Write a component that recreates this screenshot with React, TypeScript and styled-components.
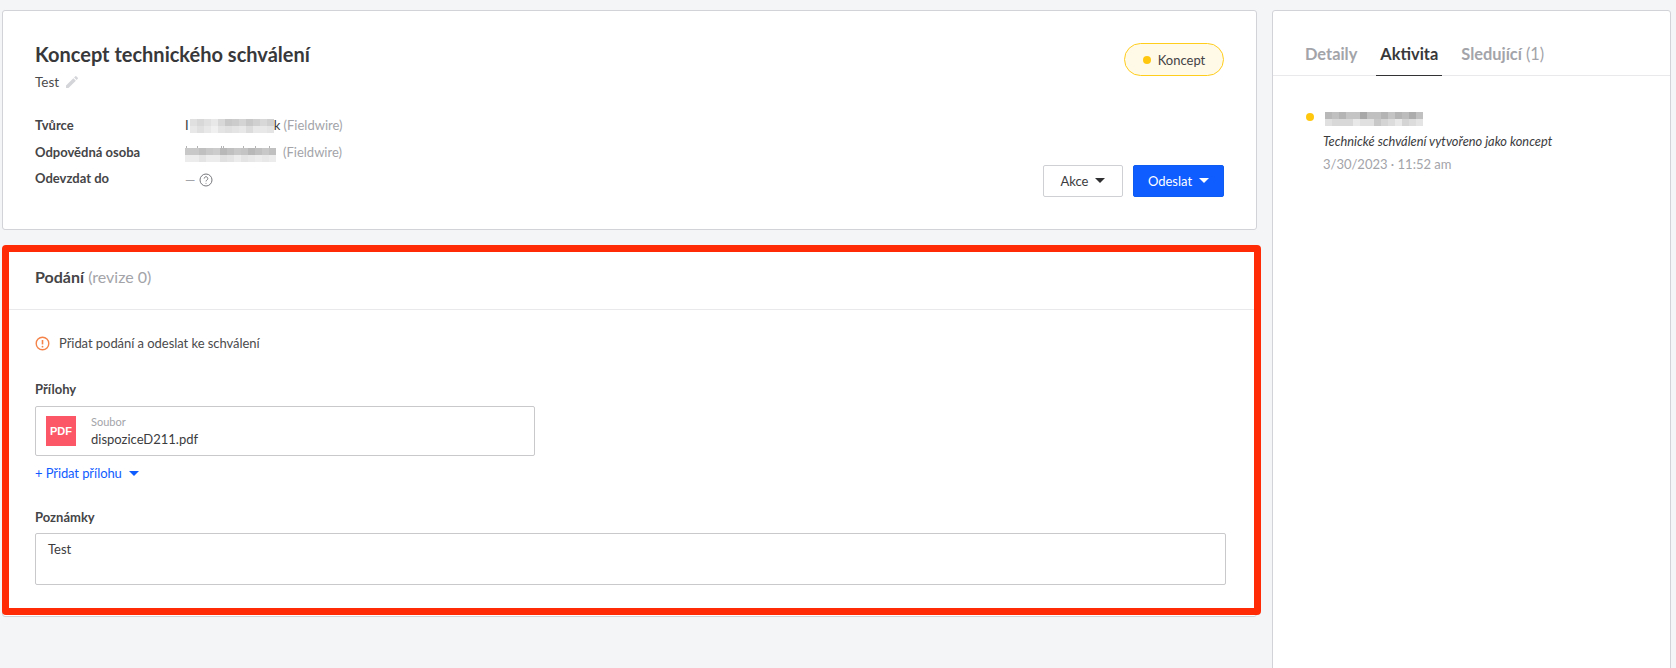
import React from "react";
import styled, { createGlobalStyle } from "styled-components";

const Global = createGlobalStyle`
  html, body { margin: 0; padding: 0; background: #f4f5f7; }
  body { font-family: Lato, "Noto Sans", sans-serif; color: #3c3c3e; font-size: 13px; }
  * { box-sizing: border-box; }
`;

const Page = styled.div`
  display: grid;
  grid-template-columns: 1255px 399px;
  column-gap: 15px;
  padding: 10px 5px 0 2px;
  height: 668px;
  overflow: hidden;
`;
const LeftColumn = styled.div`
  display: flex;
  flex-direction: column;
  gap: 20px;
`;
const Card = styled.section`
  position: relative;
  background: #fff;
  border: 1px solid #d2d3d8;
  border-radius: 3px;
`;
const SummaryCard = styled(Card)`
  height: 220px;
  padding: 30px 32px 0 32px;
  display: flex;
  flex-direction: column;
`;
const SummaryTop = styled.div`
  display: flex;
  justify-content: space-between;
  align-items: flex-start;
`;
const Title = styled.h1`
  margin: 0;
  font-size: 20px;
  line-height: 26px;
  font-weight: 700;
  color: #38383a;
`;
const SubRow = styled.div`
  display: flex;
  align-items: center;
  gap: 5px;
  margin-top: 5px;
  line-height: 20px;
  font-size: 13.5px;
  color: #4a4a4c;
`;
const Badge = styled.div`
  display: flex;
  align-items: center;
  justify-content: center;
  gap: 7px;
  width: 100px;
  height: 33px;
  margin-top: 2px;
  border: 1px solid #ffcd1c;
  border-radius: 17px;
  background: #fff9e8;
  font-size: 13px;
  color: #434345;
`;
const Dot = styled.span`
  width: 8px;
  height: 8px;
  border-radius: 50%;
  background: #ffc80f;
  flex: none;
`;
const SummaryBottom = styled.div`
  display: flex;
  justify-content: space-between;
  align-items: flex-end;
  margin-top: 20px;
`;
const Facts = styled.dl`
  display: grid;
  grid-template-columns: 150px auto;
  grid-auto-rows: 26.5px;
  align-items: center;
  margin: 0;
`;
const FactLabel = styled.dt`
  font-weight: 700;
  font-size: 13px;
  color: #454547;
`;
const FactValue = styled.dd`
  margin: 0;
  display: flex;
  align-items: center;
  font-size: 13px;
  color: #3c3c3e;
`;
const HintValue = styled(FactValue)`
  padding-top: 3px;
  gap: 4px;
`;
const Muted = styled.span`
  color: #a3a4a9;
`;
const Mosaic = styled.svg<{ $drop: number; $before: number; $after: number }>`
  display: block;
  flex: none;
  margin: ${(p) => p.$drop * 2}px ${(p) => p.$after}px 0 ${(p) => p.$before}px;
`;
const Actions = styled.div`
  display: flex;
  gap: 10px;
  margin-bottom: -5px;
`;
const Button = styled.button<{ $primary?: boolean }>`
  display: flex;
  align-items: center;
  justify-content: center;
  gap: 7px;
  height: 32px;
  width: ${(p) => (p.$primary ? "91px" : "80px")};
  padding: 0;
  border-radius: 2px;
  border: 1px solid ${(p) => (p.$primary ? "#0f5cf0" : "#cfd0d4")};
  background: ${(p) => (p.$primary ? "#0f5cff" : "#fff")};
  color: ${(p) => (p.$primary ? "#fff" : "#3c3c3e")};
  font: 400 13px Lato, sans-serif;
`;
const Caret = styled.span<{ $color?: string }>`
  width: 0;
  height: 0;
  border-left: 5px solid transparent;
  border-right: 5px solid transparent;
  border-top: 5px solid ${(p) => p.$color ?? "#2f2f31"};
`;
const SubmissionCard = styled(Card)`
  height: 367px;
`;
const Annotation = styled.div`
  position: absolute;
  left: -1px;
  top: -6px;
  width: 1259px;
  height: 370px;
  border: 7px solid #ff2a06;
  border-radius: 4px;
  pointer-events: none;
`;
const SectionHeader = styled.header`
  height: 59px;
  padding: 14px 32px 0;
  border-bottom: 1px solid #e9e9ec;
  font-size: 16px;
  line-height: 24px;
`;
const SectionName = styled.strong`
  font-weight: 700;
  color: #454547;
`;
const SectionBody = styled.div`
  padding: 23px 32px 0;
  display: flex;
  flex-direction: column;
`;
const Notice = styled.div`
  display: flex;
  align-items: center;
  gap: 9px;
  font-size: 13px;
  line-height: 20px;
  letter-spacing: -0.05px;
  color: #4a4a4c;
`;
const FieldLabel = styled.div<{ $top: number }>`
  margin-top: ${(p) => p.$top}px;
  margin-bottom: 8px;
  font-weight: 700;
  font-size: 13px;
  line-height: 18px;
  color: #454547;
`;
const FileBox = styled.div`
  width: 500px;
  height: 50px;
  display: flex;
  align-items: center;
  gap: 15px;
  padding-left: 10px;
  border: 1px solid #c9c9cc;
  border-radius: 2px;
`;
const PdfIcon = styled.div`
  width: 30px;
  height: 30px;
  display: flex;
  align-items: center;
  justify-content: center;
  background: #fb5767;
  color: #fff;
  font: 700 11px "Liberation Sans", sans-serif;
`;
const FileMeta = styled.div`
  display: flex;
  flex-direction: column;
`;
const FileKind = styled.span`
  font-size: 11px;
  line-height: 15px;
  color: #a3a4a9;
`;
const FileName = styled.span`
  font-size: 13px;
  line-height: 20px;
  color: #3c3c3e;
`;
const AddLink = styled.a`
  display: flex;
  align-items: center;
  gap: 7px;
  margin-top: 7px;
  font-size: 13px;
  line-height: 20px;
  letter-spacing: -0.1px;
  color: #0f5cff;
`;
const NotesBox = styled.div`
  width: 1191px;
  height: 52px;
  margin-top: -1px;
  padding: 5px 12px;
  border: 1px solid #c9c9cc;
  border-radius: 2px;
  font-size: 13px;
  line-height: 20px;
  color: #3c3c3e;
`;
const SidePanel = styled(Card)`
  height: 680px;
  border-radius: 3px 3px 0 0;
`;
const Tabs = styled.nav`
  display: flex;
  height: 65px;
  padding: 0 0 0 28px;
  gap: 15px;
  border-bottom: 1px solid #e9e9ec;
`;
const Tab = styled.div<{ $active?: boolean }>`
  height: 65px;
  padding: 32px 4px 0;
  font-size: 16.4px;
  line-height: 22px;
  font-weight: 700;
  color: ${(p) => (p.$active ? "#38383a" : "#a3a4a9")};
  border-bottom: 1px solid ${(p) => (p.$active ? "#333335" : "transparent")};
`;
const TabCount = styled.span`
  font-weight: 400;
`;
const Activity = styled.div`
  position: relative;
  padding: 36px 0 0 50px;
`;
const ActivityDot = styled(Dot)`
  position: absolute;
  left: 33px;
  top: 37px;
`;
const ActivityText = styled.div`
  margin-top: 5px;
  font-size: 12.8px;
  line-height: 20px;
  font-style: italic;
  color: #3c3c3e;
`;
const ActivityDate = styled.div`
  margin-top: 3px;
  font-size: 13px;
  line-height: 20px;
  color: #a3a4a9;
`;

const CELL = 7;
const TICK_ROOM = 2;
type PixelsProps = {
  top: string[];
  bottom: string[];
  drop?: number;
  before?: number;
  after?: number;
  ticks?: number[];
};
const Pixels = ({ top, bottom, drop = 0, before = 0, after = 0, ticks = [] }: PixelsProps) => {
  const offset = ticks.length ? TICK_ROOM : 0;
  return (
    <Mosaic
      $drop={drop}
      $before={before}
      $after={after}
      width={top.length * CELL}
      height={CELL * 2 + offset}
      shapeRendering="crispEdges"
    >
      {ticks.map((x) => (
        <rect key={`t${x}`} x={x} y={0} width={1} height={TICK_ROOM} fill="#b4b4b6" />
      ))}
      {top.map((g, i) => (
        <rect key={`a${i}`} x={i * CELL} y={offset} width={CELL} height={CELL} fill={`#${g}${g}${g}`} />
      ))}
      {bottom.map((g, i) => (
        <rect key={`b${i}`} x={i * CELL} y={offset + CELL} width={CELL} height={CELL} fill={`#${g}${g}${g}`} />
      ))}
    </Mosaic>
  );
};

const Pencil = () => (
  <svg width="16" height="16" viewBox="0 0 24 24" fill="#d4d5d9">
    <path d="M3 17.25V21h3.75L17.81 9.94l-3.75-3.75L3 17.25zM20.71 7.04a1 1 0 0 0 0-1.41l-2.34-2.34a1 1 0 0 0-1.41 0l-1.83 1.83 3.75 3.75 1.83-1.83z" />
  </svg>
);
const Help = () => (
  <svg width="14" height="14" viewBox="0 0 14 14" fill="none" stroke="#77787c" strokeWidth="1">
    <circle cx="7" cy="7" r="6" />
    <path d="M5.2 5.5a1.8 1.8 0 1 1 2.7 1.6c-.6.3-.9.7-.9 1.3" />
    <circle cx="7" cy="10.3" r=".5" fill="#77787c" stroke="none" />
  </svg>
);
const Warn = () => (
  <svg width="15" height="15" viewBox="0 0 15 15" fill="none" stroke="#f4834a" strokeWidth="1.4">
    <circle cx="7.5" cy="7.5" r="6.3" />
    <path d="M7.5 4v4.4" strokeWidth="1.6" />
    <circle cx="7.5" cy="10.7" r=".9" fill="#f4834a" stroke="none" />
  </svg>
);

export default function App() {
  return (
    <>
      <Global />
      <Page>
        <LeftColumn>
          <SummaryCard>
            <SummaryTop>
              <div>
                <Title>Koncept technického schválení</Title>
                <SubRow>
                  Test <Pencil />
                </SubRow>
              </div>
              <Badge>
                <Dot />
                Koncept
              </Badge>
            </SummaryTop>
            <SummaryBottom>
              <Facts>
                <FactLabel>Tvůrce</FactLabel>
                <FactValue>
                  I
                  <Pixels
                    before={1}
                    drop={1}
                    top={["e0", "d8", "e0", "e8", "d8", "c8", "cc", "d4", "c8", "d0", "d8", "d0"]}
                    bottom={["e8", "e0", "e8", "f0", "e4", "e0", "e4", "e8", "dc", "e8", "e8", "e4"]}
                  />
                  k&nbsp;<Muted>(Fieldwire)</Muted>
                </FactValue>
                <FactLabel>Odpovědná osoba</FactLabel>
                <FactValue>
                  <Pixels
                    drop={2}
                    after={7}
                    ticks={[1, 12, 36, 38, 58, 70, 84]}
                    top={["c8", "c8", "c0", "c8", "cc", "b8", "c0", "c8", "c4", "b8", "c0", "c8", "c0"]}
                    bottom={["ec", "ec", "e4", "ec", "ec", "e0", "e4", "ec", "e4", "e8", "ec", "e8", "ec"]}
                  />
                  <Muted>(Fieldwire)</Muted>
                </FactValue>
                <FactLabel>Odevzdat do</FactLabel>
                <HintValue>
                  <Muted>—</Muted>
                  <Help />
                </HintValue>
              </Facts>
              <Actions>
                <Button>
                  Akce <Caret />
                </Button>
                <Button $primary>
                  Odeslat <Caret $color="#fff" />
                </Button>
              </Actions>
            </SummaryBottom>
          </SummaryCard>
          <SubmissionCard>
            <SectionHeader>
              <SectionName>Podání</SectionName> <Muted>(revize 0)</Muted>
            </SectionHeader>
            <SectionBody>
              <Notice>
                <Warn />
                Přidat podání a odeslat ke schválení
              </Notice>
              <FieldLabel $top={27}>Přílohy</FieldLabel>
              <FileBox>
                <PdfIcon>PDF</PdfIcon>
                <FileMeta>
                  <FileKind>Soubor</FileKind>
                  <FileName>dispoziceD211.pdf</FileName>
                </FileMeta>
              </FileBox>
              <AddLink>
                + Přidat přílohu <Caret $color="#0f5cff" />
              </AddLink>
              <FieldLabel $top={25}>Poznámky</FieldLabel>
              <NotesBox>Test</NotesBox>
            </SectionBody>
            <Annotation />
          </SubmissionCard>
        </LeftColumn>
        <SidePanel>
          <Tabs>
            <Tab>Detaily</Tab>
            <Tab $active>Aktivita</Tab>
            <Tab>
              Sledující <TabCount>(1)</TabCount>
            </Tab>
          </Tabs>
          <Activity>
            <ActivityDot />
            <Pixels
              before={2}
              top={["b8", "c0", "b4", "c4", "c4", "a8", "c0", "c0", "b4", "c4", "b4", "bc", "ac", "c0"]}
              bottom={["e0", "d8", "d8", "d8", "e8", "e0", "e0", "c8", "d4", "dc", "e8", "d4", "dc", "e4"]}
            />
            <ActivityText>Technické schválení vytvořeno jako koncept</ActivityText>
            <ActivityDate>3/30/2023 · 11:52 am</ActivityDate>
          </Activity>
        </SidePanel>
      </Page>
    </>
  );
}
